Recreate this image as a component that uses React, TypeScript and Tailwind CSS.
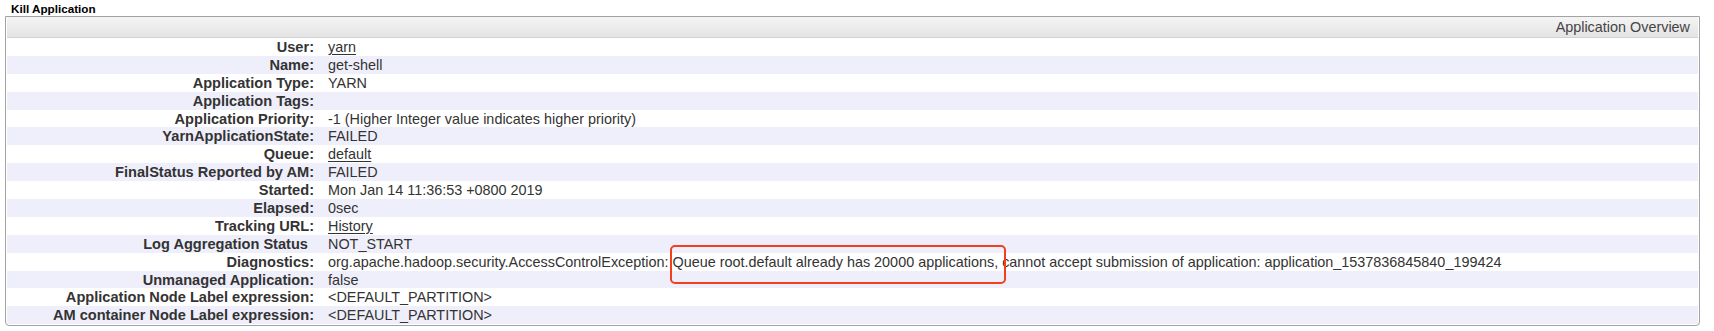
import React from 'react';

type Row = {
  label: string;
  value?: React.ReactNode;
  link?: boolean;
  noColon?: boolean;
};

const DIAG_HEAD = 'org.apache.hadoop.security.AccessControlException: ';
const DIAG_MARK = 'Queue root.default already has 20000 applications, ';
const DIAG_TAIL = 'cannot accept submission of application: application_1537836845840_199424';

const rows: Row[] = [
  { label: 'User:', value: 'yarn', link: true },
  { label: 'Name:', value: 'get-shell' },
  { label: 'Application Type:', value: 'YARN' },
  { label: 'Application Tags:' },
  { label: 'Application Priority:', value: '-1 (Higher Integer value indicates higher priority)' },
  { label: 'YarnApplicationState:', value: 'FAILED' },
  { label: 'Queue:', value: 'default', link: true },
  { label: 'FinalStatus Reported by AM:', value: 'FAILED' },
  { label: 'Started:', value: 'Mon Jan 14 11:36:53 +0800 2019' },
  { label: 'Elapsed:', value: '0sec' },
  { label: 'Tracking URL:', value: 'History', link: true },
  { label: 'Log Aggregation Status', value: 'NOT_START', noColon: true },
  {
    label: 'Diagnostics:',
    value: (
      <>
        {DIAG_HEAD}
        <span className="relative">
          {DIAG_MARK}
          {/* red annotation box drawn over the screenshot */}
          <span className="pointer-events-none absolute -left-[3px] -right-[4px] -top-[9px] -bottom-[14px] rounded-[5px] border-2 border-[#f2401d]" />
        </span>
        {DIAG_TAIL}
      </>
    ),
  },
  { label: 'Unmanaged Application:', value: 'false' },
  { label: 'Application Node Label expression:', value: '<DEFAULT_PARTITION>' },
  { label: 'AM container Node Label expression:', value: '<DEFAULT_PARTITION>' },
];

export default function App() {
  return (
    <div className="h-[331px] w-[1714px] bg-white font-['Liberation_Sans',Arial,Helvetica,sans-serif] text-[#333]">
      <div className="h-[16px] pl-[11px] pt-[2px] text-[11.7px] font-bold leading-[13px] text-black">
        Kill Application
      </div>

      <div className="ml-[5px] w-[1695px] rounded-b-[4px] border border-[#a3a3a3] p-[1px] pt-0">
        <div className="flex h-[21px] items-center justify-end border-b border-[#d2d2d2] bg-gradient-to-b from-[#f4f4f4] to-[#e4e4e4] pr-[8px] text-[14.4px] leading-none text-[#444]">
          Application Overview
        </div>

        {rows.map((r, i) => (
          <div
            key={r.label}
            className={`flex h-[17.9px] items-center text-[14.4px] leading-[18px] ${i % 2 === 1 ? 'bg-[#efeffb]' : 'bg-white'}`}
          >
            <div
              className={`w-[307px] shrink-0 whitespace-nowrap text-right text-[14.6px] font-bold ${r.noColon ? 'pr-[6px]' : ''}`}
            >
              {r.label}
            </div>
            <div className="whitespace-nowrap pl-[14px]">
              {r.link ? <span className="underline underline-offset-2">{r.value}</span> : r.value}
            </div>
          </div>
        ))}
      </div>
    </div>
  );
}
